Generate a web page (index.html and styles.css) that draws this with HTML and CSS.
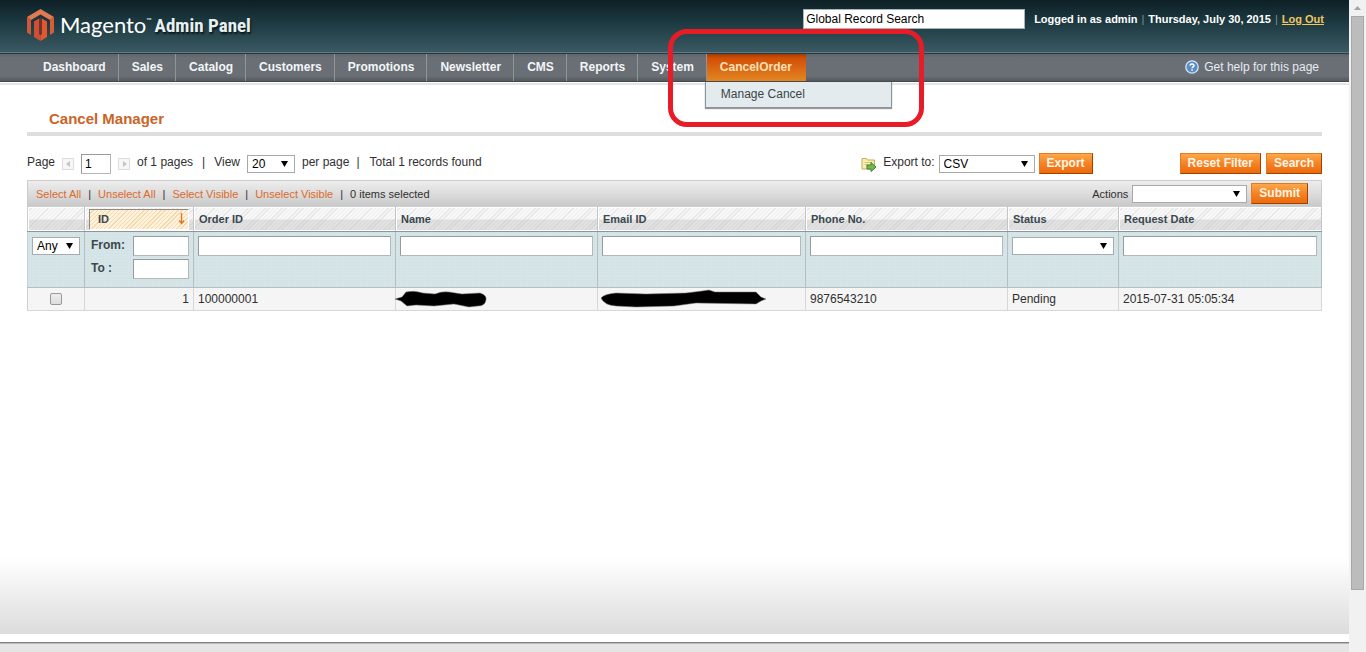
FILE: index.html
```html
<!DOCTYPE html>
<html lang="en">
<head>
<meta charset="utf-8">
<title>Cancel Manager / Magento Admin</title>
<link rel="stylesheet" href="styles.css">
</head>
<body>
<div class="page">
  <header class="header">
    <a class="logo" href="#">
      <svg class="logo-mark" width="27" height="32" viewBox="0 0 27 32" aria-hidden="true">
        <path d="M0 8 13.500 0 27 8 23 11 13.500 5.500 4 11Z" fill="#e07a50"/>
        <path d="M0 8 4 10.500V26L0 23.500Z" fill="#d0583a"/>
        <path d="M27 8 23 10.500V26L27 23.500Z" fill="#d55d37"/>
        <path d="M7 12.500 12 9.500V25L13.500 26V32L7 28Z" fill="#cf4f34"/>
        <path d="M20 12.500 15 9.500V25L13.500 26V32L20 28Z" fill="#e4572e"/>
        <path d="M12 9.500 13.500 8.500 15 9.500V25L13.500 26 12 25Z" fill="#6b3430"/>
      </svg>
      <span class="logo-name">Magento</span><span class="logo-tm">™</span>
      <span class="logo-panel">Admin Panel</span>
    </a>
    <div class="header-right">
      <input class="global-search" type="text" value="Global Record Search" aria-label="Global Record Search">
      <span>Logged in as admin</span><span class="pipe">|</span>
      <span>Thursday, July 30, 2015</span><span class="pipe">|</span>
      <a class="logout" href="#">Log Out</a>
    </div>
  </header>
  <nav class="nav">
    <ul class="menu">
      <li><a href="#">Dashboard</a></li>
      <li><a href="#">Sales</a></li>
      <li><a href="#">Catalog</a></li>
      <li><a href="#">Customers</a></li>
      <li><a href="#">Promotions</a></li>
      <li><a href="#">Newsletter</a></li>
      <li><a href="#">CMS</a></li>
      <li><a href="#">Reports</a></li>
      <li><a href="#">System</a></li>
      <li class="active"><a href="#">CancelOrder</a>
        <ul class="submenu"><li><a href="#">Manage Cancel</a></li></ul>
        <span class="highlight"></span>
      </li>
    </ul>
    <a class="help" href="#">
      <svg width="14" height="14" viewBox="0 0 14 14" aria-hidden="true">
        <circle cx="7" cy="7" r="6.200" fill="#5a8dc6" stroke="#dbe7f5" stroke-width="1.300"/>
        <path d="M5 5.600C5.100 3.500 9 3.500 9 5.500 9 6.900 7.100 6.800 7.100 8.300M7.100 9.300v1.400" fill="none" stroke="#fff" stroke-width="1.500"/>
      </svg>
      Get help for this page
    </a>
  </nav>
  <main class="content">
    <h1 class="title">Cancel Manager</h1>
    <div class="toolbar">
      <label for="page">Page</label>
      <button class="pager" type="button" aria-label="Previous page"><svg width="5" height="6" viewBox="0 0 5 6"><path d="M4 0v6L0 3z" fill="#c4c4c4"/></svg></button>
      <input class="field page-no" id="page" type="text" value="1">
      <button class="pager" type="button" aria-label="Next page"><svg width="5" height="6" viewBox="0 0 5 6"><path d="M1 0v6l4-3z" fill="#c4c4c4"/></svg></button>
      <span>of 1 pages</span>
      <span class="sep">|</span>
      <label for="limit">View</label>
      <select class="select limit" id="limit"><option>20</option></select>
      <span>per page</span>
      <span class="sep-tight">|</span>
      <span>Total 1 records found</span>
      <div class="export">
        <svg width="16" height="16" viewBox="0 0 16 16" aria-hidden="true">
          <path d="M1 13V2.500H5.500L6.500 4H13.500V13Z" fill="#f8eeb0" stroke="#c5ab58"/>
          <path d="M3.500 6.500H11M3.500 8.500H7" stroke="#d9c472"/>
          <path d="M6 9H10V6.500L15 11 10 15.500V13H6Z" fill="#73b752" stroke="#3f8234"/>
        </svg>
        <label for="format">Export to:</label>
        <select class="select format" id="format"><option>CSV</option></select>
        <button class="btn" type="button">Export</button>
      </div>
      <div class="filter-actions">
        <button class="btn" type="button">Reset Filter</button>
        <button class="btn" type="button">Search</button>
      </div>
    </div>
    <div class="massaction">
      <a href="#">Select All</a><span>|</span>
      <a href="#">Unselect All</a><span>|</span>
      <a href="#">Select Visible</a><span>|</span>
      <a href="#">Unselect Visible</a><span>|</span>
      <span>0 items selected</span>
      <div class="mass-form">
        <label for="actions">Actions</label>
        <select class="select actions" id="actions"><option></option></select>
        <button class="btn submit" type="button">Submit</button>
      </div>
    </div>
    <table class="grid">
      <colgroup>
        <col class="c-check"><col class="c-id"><col class="c-text"><col class="c-text"><col class="c-email"><col class="c-text"><col class="c-status"><col>
      </colgroup>
      <thead>
        <tr class="headings">
          <th></th>
          <th class="sorted"><a href="#">ID
            <svg width="7" height="12" viewBox="0 0 7 12" aria-hidden="true"><path d="M3.500 0V10M1 7.500 3.500 10.500 6 7.500" fill="none" stroke="#d9792a" stroke-width="1.400"/></svg></a></th>
          <th>Order ID</th><th>Name</th><th>Email ID</th><th>Phone No.</th><th>Status</th><th>Request Date</th>
        </tr>
        <tr class="filters">
          <td><select class="select" aria-label="Selected"><option>Any</option></select></td>
          <td>
            <div class="range"><label for="from">From:</label><input class="field" id="from" type="text"></div>
            <div class="range"><label for="to">To :</label><input class="field" id="to" type="text"></div>
          </td>
          <td><input class="field" type="text" aria-label="Order ID"></td>
          <td><input class="field" type="text" aria-label="Name"></td>
          <td><input class="field" type="text" aria-label="Email ID"></td>
          <td><input class="field" type="text" aria-label="Phone No."></td>
          <td><select class="select" aria-label="Status"><option></option></select></td>
          <td><input class="field" type="text" aria-label="Request Date"></td>
        </tr>
      </thead>
      <tbody>
        <tr>
          <td class="center"><input class="check" type="checkbox" aria-label="Select record 1"></td>
          <td class="right">1</td>
          <td>100000001</td>
          <td class="masked">
            <svg class="scribble" width="96" height="22" viewBox="0 0 96 22" aria-hidden="true"><path d="M1 11 8 9 12 4Q20 2 29 5L41 6Q48 3 55 4L68 6 86 5Q93 7 92 12 91 18 84 18L75 19 60 16 40 18 22 17 13 18 7 13Z" fill="#000" stroke="#777" stroke-opacity=".5"/></svg></td>
          <td class="masked">
            <svg class="scribble" width="172" height="22" viewBox="0 0 172 22" aria-hidden="true"><path d="M5 10Q8 6 20 5L50 6 90 5 106 3 113 2 119 4 160 4 165 9 170 11 165 13 160 16 100 15 78 18 40 19 20 18Q8 17 5 10Z" fill="#000" stroke="#777" stroke-opacity=".5"/></svg></td>
          <td>9876543210</td><td>Pending</td><td>2015-07-31 05:05:34</td>
        </tr>
      </tbody>
    </table>
  </main>
  <footer class="footer"></footer>
</div>
<div class="scrollbar" aria-hidden="true">
  <svg class="scroll-arrow" width="17" height="16" viewBox="0 0 17 16"><path d="M5 10 8.500 6 12 10Z" fill="#a3a3a3"/></svg>
  <span class="scroll-thumb"></span>
  <span class="scroll-rest"></span>
</div>
</body>
</html>
```
FILE: styles.css
```css
* { box-sizing: border-box; }
body {
  display: flex;
  min-height: 100vh;
  margin: 0;
  background: #fff;
  color: #2f2f2f;
  font: 12px/16px "Liberation Sans", Arial, sans-serif;
}
a { color: inherit; text-decoration: none; }
input, select, button { margin: 0; font: inherit; color: #000; border-radius: 0; }
ul { margin: 0; padding: 0; list-style: none; }

.page { flex: 1; min-width: 0; display: flex; flex-direction: column; }

.header {
  display: flex;
  justify-content: space-between;
  align-items: flex-start;
  height: 54px;
  padding: 9px 25px 0 27px;
  background: linear-gradient(#0d2025, #1e3b43 45%, #3b5a63);
  border-bottom: 1px solid #263b41;
  box-shadow: inset 0 -1px #66797e;
}
.logo { display: flex; align-items: flex-start; color: #fff; white-space: nowrap; }
.logo-name { margin-left: 6px; font: 22px/32px Lato, sans-serif; }
.logo-tm { padding-top: 6px; font: 7px/10px Lato, sans-serif; }
.logo-panel {
  margin-left: 3px;
  padding-top: 1px;
  color: #e8f1f1;
  font: bold 19px/32px "Liberation Sans Narrow", "Roboto Condensed", "Open Sans Condensed", "Liberation Sans", sans-serif;
  text-shadow: 1px 2px 2px #061317;
}
.header-right { display: flex; align-items: center; color: #fff; font-size: 11px; font-weight: bold; }
.global-search {
  width: 222px;
  height: 20px;
  margin-right: 9px;
  padding: 0 2px;
  border: 1px solid #a5b5b8;
  background: #fff;
  font-size: 12px;
  font-weight: normal;
}
.pipe { margin: 0 4px; color: #7f9297; font-weight: normal; }
.logout { color: #f2c65f; text-decoration: underline; }

.nav {
  display: flex;
  justify-content: space-between;
  height: 31px;
  padding: 0 30px;
  background: linear-gradient(#5e6469, #696f74 4px, #696f74 22px, #52585c 27px, #353b3d 28px, #fff 28px, #fff 29px, #e3e6e8 29px);
}
.menu { display: flex; height: 27px; }
.menu > li { border-right: 1px solid #8f969a; }
.menu > li > a { display: block; padding: 5px 12px 6px 13px; color: #f3f6f7; font-weight: bold; }
.menu > li.active { position: relative; border: 0; }
.menu > li.active > a { padding-right: 14px; background: linear-gradient(#9d3c05, #d24e06 4px, #e28623); color: #fde0b8; }
.submenu {
  position: absolute;
  top: 28px;
  left: -2px;
  width: 187px;
  border: 1px solid #8b9499;
  border-top: 0;
  background: #e3ebee;
  box-shadow: 0 1px 1px #999;
}
.submenu a { display: block; padding: 4px 15px 5px; color: #3a4548; }
.highlight {
  position: absolute;
  top: -25px;
  left: -39px;
  width: 256px;
  height: 98px;
  border: 5px solid #e81c26;
  border-radius: 19px;
  pointer-events: none;
}
.help { display: flex; align-items: center; gap: 5px; height: 26px; color: #e6ebf3; }

.content {
  flex: 1;
  padding: 25px 27px 80px;
  background: linear-gradient(to top, #dcdcdc, #fff) no-repeat 0 100% / 100% 76px;
}
.title {
  margin: 0 0 17px;
  padding: 0 22px 5px;
  border-bottom: 4px solid #dedede;
  color: #ca6428;
  font-size: 15px;
  line-height: 17px;
}
.toolbar { display: flex; align-items: center; gap: 7px; height: 21px; margin-bottom: 6px; white-space: nowrap; }
.toolbar label, .toolbar span { padding-bottom: 3px; }
.sep { margin: 0 2px; }
.sep-tight { margin-right: 3px; }
.pager {
  display: flex;
  align-items: center;
  justify-content: center;
  width: 12px;
  height: 12px;
  padding: 0;
  border: 1px solid #ddd;
  background: #f7f7f7;
}
.field { width: 100%; height: 20px; padding: 0 3px; border: 1px solid #aaa; border-color: #979b9e #b4b8ba #b4b8ba #979b9e; background: #fff; }
.field.page-no { width: 30px; }
.select {
  height: 18px;
  padding: 0 4px;
  border: 1px solid #a9a9a9;
  appearance: none;
  background: #fff url("data:image/svg+xml,%3Csvg xmlns='http://www.w3.org/2000/svg' width='7' height='6'%3E%3Cpath d='M0 0h7L3.500 6z'/%3E%3C/svg%3E") no-repeat right 6px center;
}
.limit { width: 48px; }
.format { width: 96px; }
.actions { width: 115px; }
.btn {
  height: 21px;
  padding: 0 7px 1px;
  border: 1px solid #ed6502;
  border-color: #e57a20 #a04300 #a04300 #e57a20;
  background: linear-gradient(#fba94b, #f58224 50%, #ed6a0c);
  color: #fff5e6;
  font-weight: bold;
  white-space: nowrap;
}
.export { display: flex; align-items: center; gap: 4px; margin-left: auto; }
.export svg { margin-right: 2px; }
.filter-actions { display: flex; gap: 5px; margin-left: 80px; }

.massaction {
  display: flex;
  align-items: center;
  gap: 7px;
  height: 26px;
  padding: 0 13px 0 8px;
  border: 1px solid #ccc;
  border-bottom: 0;
  background: linear-gradient(#ededed, #d9d9d9 60%, #c9c9c9);
  font-size: 11px;
}
.massaction > a { color: #dc6a2a; }
.mass-form { display: flex; align-items: center; gap: 4px; margin-left: auto; }
.submit { font-size: 12px; }

.grid { width: 100%; table-layout: fixed; border-collapse: collapse; border: 1px solid #cdd0d2; }
.c-check { width: 57px; }
.c-id { width: 109px; }
.c-text { width: 202px; }
.c-email { width: 208px; }
.c-status { width: 111px; }
.headings th {
  height: 25px;
  padding: 0 5px;
  border-right: 1px solid #c3c6c9;
  border-bottom: 1px solid #8d969b;
  background:
    linear-gradient(transparent 50%, rgba(190, 190, 190, .4) 50%),
    repeating-linear-gradient(135deg, #fbfbfb 0 2px, #e2e2e2 2px 3px);
  box-shadow: inset 1px 1px #fff, inset 0 -1px #fff;
  color: #3a4850;
  font-size: 11px;
  text-align: left;
}
.headings .sorted { padding: 1px 4px; }
.sorted a {
  display: flex;
  justify-content: space-between;
  align-items: center;
  height: 21px;
  padding: 0 3px 0 8px;
  border: 1px solid #998e82;
  border-color: #8f8980 #fff #fff #8f8980;
  background: repeating-linear-gradient(135deg, #fff2dc 0 2px, #f5d9ae 2px 3px);
}
.filters td {
  height: 56px;
  padding: 4px;
  border-right: 1px solid #b3bfc3;
  border-bottom: 1px solid #b3bfc3;
  background: radial-gradient(#dce9eb 30%, #d1e1e4 60%) 0 0 / 3px 3px;
  vertical-align: top;
}
.filters .field, .filters .select { display: block; width: 100%; }
.filters .select { margin-top: 1px; border-color: #a5abb0; }
.range { display: flex; justify-content: space-between; margin-bottom: 3px; }
.range label { font-weight: bold; padding: 1px 0 0 2px; color: #3c484c; }
.filters .range .field { width: 56px; }
tbody td { height: 23px; padding: 0 4px; border-right: 1px solid #d5d8da; border-bottom: 1px solid #d5d8da; background: #f5f5f5; }
tbody .right { text-align: right; }
tbody .center { text-align: center; }
.check {
  appearance: none;
  display: block;
  width: 12px;
  height: 12px;
  margin: 0 auto;
  border: 1px solid #999;
  border-radius: 2px;
  background: linear-gradient(#eee, #ddd);
}
.masked { position: relative; }
.scribble { position: absolute; left: -2px; top: 0; }

.footer { height: 10px; margin-top: 8px; border-top: 1px solid #808080; background: #e5e5e5; box-shadow: inset 0 1px #bbb; }

.scrollbar { display: flex; flex-direction: column; width: 17px; background: #f1f1f1; }
.scroll-arrow { flex: none; }
.scroll-thumb { flex: 574; margin: 0 2px; border: 1px solid #a8a8a8; background: #bcbcbc; }
.scroll-rest { flex: 62; }
```
